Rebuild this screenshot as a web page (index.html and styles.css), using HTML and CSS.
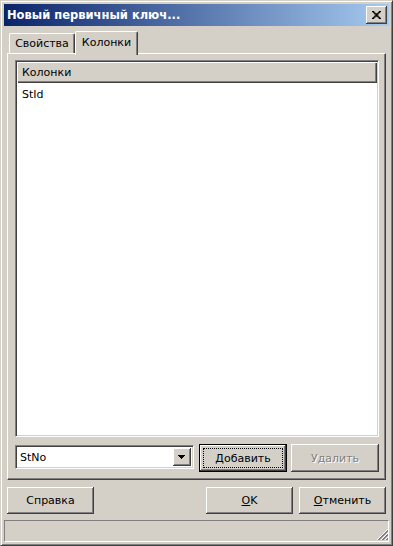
FILE: index.html
```html
<!DOCTYPE html>
<html lang="ru">
<head>
<meta charset="utf-8">
<title>Новый первичный ключ...</title>
<link rel="stylesheet" href="styles.css">
</head>
<body>
<div class="window">
  <div class="titlebar">
    <span class="title">Новый первичный ключ...</span>
    <div class="close">
      <svg width="9" height="8" viewBox="0 0 8 7"><path fill="#000" d="M0 0h2v1H0z M6 0h2v1H6z M1 1h2v1H1z M5 1h2v1H5z M2 2h4v1H2z M3 3h2v1H3z M2 4h4v1H2z M1 5h2v1H1z M5 5h2v1H5z M0 6h2v1H0z M6 6h2v1H6z"/></svg>
    </div>
  </div>
  <div class="tabs">
    <div class="tab">Свойства</div>
    <div class="tab active">Колонки</div>
  </div>
  <div class="panel">
    <div class="listbox">
      <div class="list-header">Колонки</div>
      <div class="list-item">StId</div>
    </div>
    <div class="row">
      <div class="combo">
        <span class="combo-text">StNo</span>
        <div class="combo-btn">
          <svg width="7" height="4" viewBox="0 0 7 4"><path fill="#000" d="M0 0h7v1H0z M1 1h5v1H1z M2 2h3v1H2z M3 3h1v1H3z"/></svg>
        </div>
      </div>
      <div class="btn default"><span class="focus">Добавить</span></div>
      <div class="btn disabled">Удалить</div>
    </div>
  </div>
  <div class="buttons">
    <div class="btn">Справка</div>
    <div class="spacer"></div>
    <div class="btn"><u>O</u>K</div>
    <div class="btn"><u>О</u>тменить</div>
  </div>
  <div class="statusbar">
    <svg class="grip" width="12" height="12" viewBox="0 0 12 12" shape-rendering="crispEdges">
      <path stroke="#ffffff" d="M0.5 11.5L11.5 0.5 M4.5 11.5L11.5 4.5 M8.5 11.5L11.5 8.5"/>
      <path stroke="#808080" d="M1.5 11.5L11.5 1.5 M2.5 11.5L11.5 2.5 M5.5 11.5L11.5 5.5 M6.5 11.5L11.5 6.5 M9.5 11.5L11.5 9.5 M10.5 11.5L11.5 10.5"/>
    </svg>
  </div>
</div>
</body>
</html>
```
FILE: styles.css
```css
* { box-sizing: border-box; }
html, body {
  margin: 0;
  padding: 0;
  background: #d4d0c8;
}
body {
  font-family: "DejaVu Sans", Verdana, sans-serif;
  font-size: 11px;
  color: #000;
}
.window {
  width: 393px;
  height: 546px;
  background: #d4d0c8;
  border: 1px solid;
  border-color: #d4d0c8 #404040 #404040 #d4d0c8;
  box-shadow: inset 1px 1px #ffffff, inset -1px -1px #808080;
  padding: 3px;
  display: flex;
  flex-direction: column;
}
.titlebar {
  height: 22px;
  flex: none;
  display: flex;
  align-items: center;
  padding: 0 2px 0 3px;
  background: linear-gradient(to right, #0a246a, #a6caf0);
}
.title {
  color: #fff;
  font-weight: bold;
  font-size: 11.5px;
  white-space: nowrap;
}
.close {
  margin-left: auto;
  width: 21px;
  height: 18px;
  background: #d4d0c8;
  box-shadow: inset -1px -1px #404040, inset 1px 1px #ffffff, inset -2px -2px #808080, inset 2px 2px #d4d0c8;
  display: flex;
  align-items: center;
  justify-content: center;
  padding: 0 1px 1px 0;
}
.close svg { display: block; }
.tabs {
  flex: none;
  height: 22px;
  margin-top: 5px;
  padding-left: 5px;
  display: flex;
  align-items: flex-end;
}
.tab {
  height: 20px;
  width: 66px;
  text-align: center;
  line-height: 14px;
  padding-top: 3px;
  background: #d4d0c8;
  border-top: 1px solid #fff;
  border-left: 1px solid #fff;
  border-right: 1px solid #404040;
  border-radius: 2px 2px 0 0;
  box-shadow: inset -1px 0 #808080;
  white-space: nowrap;
}
.tab.active {
  width: 63px;
  height: 24px;
  padding-top: 4px;
  margin-bottom: -2px;
  position: relative;
  z-index: 1;
}
.panel {
  flex: none;
  height: 427px;
  margin: 0 3px;
  border-top: 1px solid #fff;
  border-left: 1px solid #fff;
  border-right: 1px solid #404040;
  border-bottom: 1px solid #404040;
  box-shadow: inset -1px -1px #808080;
  padding: 6px 6px 7px 7px;
  display: flex;
  flex-direction: column;
  gap: 7px;
}
.listbox {
  flex: 1;
  background: #fff;
  border: 1px solid;
  border-color: #808080 #fff #fff #808080;
  box-shadow: inset 1px 1px #404040, inset -1px -1px #d4d0c8;
  padding: 1px;
}
.list-header {
  height: 21px;
  background: #d4d0c8;
  box-shadow: inset 1px 1px #ffffff, inset -1px -1px #404040, inset -2px -2px #808080;
  padding-left: 5px;
  line-height: 21px;
}
.list-item {
  padding: 4px 5px 0;
  line-height: 16px;
}
.row {
  flex: none;
  height: 28px;
  display: flex;
  align-items: flex-start;
}
.combo {
  width: 179px;
  height: 24px;
  margin-top: 1px;
  background: #fff;
  border: 1px solid;
  border-color: #808080 #fff #fff #808080;
  box-shadow: inset 1px 1px #404040, inset -1px -1px #d4d0c8;
  padding: 2px;
  display: flex;
  align-items: center;
}
.combo-text {
  flex: 1;
  padding-left: 2px;
}
.combo-btn {
  width: 18px;
  height: 100%;
  background: #d4d0c8;
  box-shadow: inset -1px -1px #404040, inset 1px 1px #ffffff, inset -2px -2px #808080;
  display: flex;
  align-items: center;
  justify-content: center;
  padding: 0 1px 1px 0;
}
.combo-btn svg { display: block; }
.btn {
  flex: none;
  width: 87px;
  height: 27px;
  background: #d4d0c8;
  box-shadow: inset -1px -1px #404040, inset 1px 1px #ffffff, inset -2px -2px #808080;
  display: flex;
  align-items: center;
  justify-content: center;
  white-space: nowrap;
}
.row .btn {
  width: 88px;
  height: 28px;
}
.btn.default {
  margin-left: 5px;
  border: 1px solid #000;
  padding: 3px;
}
.btn .focus {
  flex: 1;
  align-self: stretch;
  border: 1px dotted #000;
  display: flex;
  align-items: center;
  justify-content: center;
}
.btn.disabled {
  margin-left: 4px;
  color: #808080;
  text-shadow: 1px 1px #ffffff;
}
.buttons {
  flex: none;
  margin: 7px 3px 0;
  height: 27px;
  display: flex;
  gap: 6px;
}
.spacer { flex: 1; }
.statusbar {
  flex: none;
  margin-top: 6px;
  height: 22px;
  border: 1px solid;
  border-color: #808080 #fff #fff #808080;
  display: flex;
  justify-content: flex-end;
  align-items: flex-end;
}
.grip { display: block; }
```
